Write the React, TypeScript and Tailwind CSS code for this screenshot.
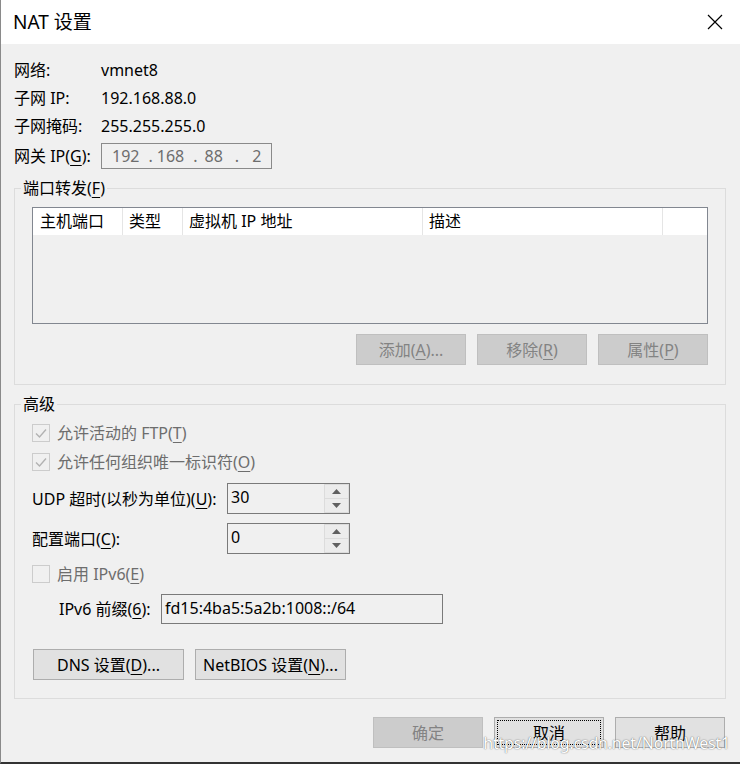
import React from "react";

const font = "font-['Segoe_UI','Noto_Sans','Noto_Sans_CJK_SC',sans-serif]";

function Key({ k }: { k: string }) {
  return <u className="underline-offset-[3px] decoration-1">{k}</u>;
}

function Check({ checked, children }: { checked?: boolean; children: React.ReactNode }) {
  return (
    <div className="flex h-[29px] items-center gap-[7px] text-[#6d6d6d]">
      <div className="flex h-[18px] w-[18px] items-center justify-center border border-[#cccccc] bg-[#f0f0f0]">
        {checked && (
          <svg width="14" height="14" viewBox="0 0 14 14">
            <path d="M2 7.5 L5.5 11 L12 3.5" fill="none" stroke="#b2b2b2" strokeWidth="1.4" />
          </svg>
        )}
      </div>
      <span>{children}</span>
    </div>
  );
}

function Spin({ value }: { value: string }) {
  return (
    <div className="flex h-[31px] w-[123px] border border-[#7a7a7a] bg-[#f0f0f0]">
      <div className="flex-1 pl-[3px] pt-[2px] leading-[22px] text-black">{value}</div>
      <div className="flex w-[25px] flex-col">
        <div className="flex h-[15px] items-center justify-center border border-[#dcdcdc] bg-[#ececec]">
          <svg width="9" height="5" viewBox="0 0 9 5">
            <path d="M0 5 L4.5 0 L9 5 Z" fill="#606060" />
          </svg>
        </div>
        <div className="flex flex-1 items-center justify-center border border-t-0 border-[#dcdcdc] bg-[#ececec]">
          <svg width="9" height="5" viewBox="0 0 9 5">
            <path d="M0 0 L4.5 5 L9 0 Z" fill="#606060" />
          </svg>
        </div>
      </div>
    </div>
  );
}

function Btn({
  children,
  disabled,
  focus,
  w = "w-[110px]",
}: {
  children: React.ReactNode;
  disabled?: boolean;
  focus?: boolean;
  w?: string;
}) {
  return (
    <div
      className={`relative flex h-[31px] ${w} items-center justify-center border ${
        disabled ? "border-[#bfbfbf] bg-[#cccccc] text-[#838383]" : "border-[#adadad] bg-[#e1e1e1] text-black"
      }`}
    >
      {focus && <div className="absolute inset-[2px] border border-dotted border-black" />}
      <span>{children}</span>
    </div>
  );
}

export default function App() {
  return (
    <div
      className={`relative h-[764px] w-[740px] overflow-hidden border-b-2 border-l border-b-[#333] border-l-[#8a8a8a] bg-[#f0f0f0] text-[16px] leading-[20px] text-black ${font}`}
    >
      {/* title bar */}
      <div className="flex h-[44px] items-center justify-between bg-white pl-[12px] pr-[17px]">
        <span className="text-[19px]">NAT 设置</span>
        <svg width="16" height="16" viewBox="0 0 16 16">
          <path d="M1 1 L15 15 M15 1 L1 15" stroke="#000" strokeWidth="1.2" />
        </svg>
      </div>

      <div className="pl-[13px] pr-[14px]">
        {/* info */}
        <div className="pt-[12px]">
          <div className="flex h-[28px] items-center">
            <span className="w-[87px]">网络:</span>
            <span>vmnet8</span>
          </div>
          <div className="flex h-[28px] items-center">
            <span className="w-[87px]">子网 IP:</span>
            <span>192.168.88.0</span>
          </div>
          <div className="flex h-[28px] items-center">
            <span className="w-[87px]">子网掩码:</span>
            <span>255.255.255.0</span>
          </div>
          <div className="mt-[3px] flex h-[26px] items-center">
            <span className="w-[87px]">
              网关 IP(<Key k="G" />):
            </span>
            <div className="flex h-[26px] w-[171px] items-center border border-[#8a8a8a] pl-[10px] text-[#6d6d6d]">
              <span>192</span>
              <span className="ml-[9px]">.</span>
              <span className="ml-[4px]">168</span>
              <span className="ml-[9px]">.</span>
              <span className="ml-[7px]">88</span>
              <span className="ml-[12px]">.</span>
              <span className="ml-[13px]">2</span>
            </div>
          </div>
        </div>

        {/* port forwarding */}
        <fieldset className="mt-[9px] h-[207px] border border-[#dcdcdc]">
          <legend className="ml-[6px] px-[2px] leading-[20px]">
            端口转发(<Key k="F" />)
          </legend>
          <div className="px-[17px] pt-[9px]">
            <div className="h-[117px] border border-[#828790]">
              <div className="flex h-[27px] items-center bg-white">
                <div className="h-full w-[90px] border-r border-[#e5e5e5] pl-[7px] leading-[27px]">主机端口</div>
                <div className="h-full w-[60px] border-r border-[#e5e5e5] pl-[6px] leading-[27px]">类型</div>
                <div className="h-full w-[240px] border-r border-[#e5e5e5] pl-[6px] leading-[27px]">虚拟机 IP 地址</div>
                <div className="h-full w-[240px] border-r border-[#e5e5e5] pl-[6px] leading-[27px]">描述</div>
                <div className="h-full flex-1" />
              </div>
            </div>
            <div className="mt-[10px] flex justify-end gap-[11px]">
              <Btn disabled>
                添加(<Key k="A" />)...
              </Btn>
              <Btn disabled>
                移除(<Key k="R" />)
              </Btn>
              <Btn disabled>
                属性(<Key k="P" />)
              </Btn>
            </div>
          </div>
        </fieldset>

        {/* advanced */}
        <fieldset className="mt-[9px] h-[305px] border border-[#dcdcdc]">
          <legend className="ml-[6px] px-[2px] leading-[20px]">高级</legend>
          <div className="pl-[17px] pt-[4px]">
            <Check checked>
              允许活动的 FTP(<Key k="T" />)
            </Check>
            <Check checked>
              允许任何组织唯一标识符(<Key k="O" />)
            </Check>
            <div className="mt-[7px] flex items-center">
              <span className="w-[195px]">
                UDP 超时(以秒为单位)(<Key k="U" />):
              </span>
              <Spin value="30" />
            </div>
            <div className="mt-[9px] flex items-center">
              <span className="w-[195px]">
                配置端口(<Key k="C" />):
              </span>
              <Spin value="0" />
            </div>
            <div className="mt-[5px]">
              <Check>
                启用 IPv6(<Key k="E" />)
              </Check>
            </div>
            <div className="mt-[6px] flex items-center">
              <span className="ml-[27px] w-[102px]">
                IPv6 前缀(<Key k="6" />):
              </span>
              <div className="h-[30px] w-[282px] border border-[#7a7a7a] pl-[3px] pt-[1px] leading-[24px]">
                fd15:4ba5:5a2b:1008::/64
              </div>
            </div>
            <div className="ml-[1px] mt-[25px] flex gap-[11px]">
              <Btn w="w-[151px]">
                DNS 设置(<Key k="D" />)...
              </Btn>
              <Btn w="w-[151px]">
                NetBIOS 设置(<Key k="N" />)...
              </Btn>
            </div>
          </div>
        </fieldset>

        {/* footer buttons */}
        <div className="mt-[18px] flex justify-end gap-[11px] pr-[1px]">
          <Btn disabled>确定</Btn>
          <Btn focus>取消</Btn>
          <Btn>帮助</Btn>
        </div>
      </div>

      <div className="absolute bottom-[9px] right-[10px] text-[16px] tracking-[-0.2px] text-white [text-shadow:0_0_1px_rgba(0,0,0,0.55),0_0_2px_rgba(0,0,0,0.25)]">
        https://blog.csdn.net/NorthWest1
      </div>
    </div>
  );
}
